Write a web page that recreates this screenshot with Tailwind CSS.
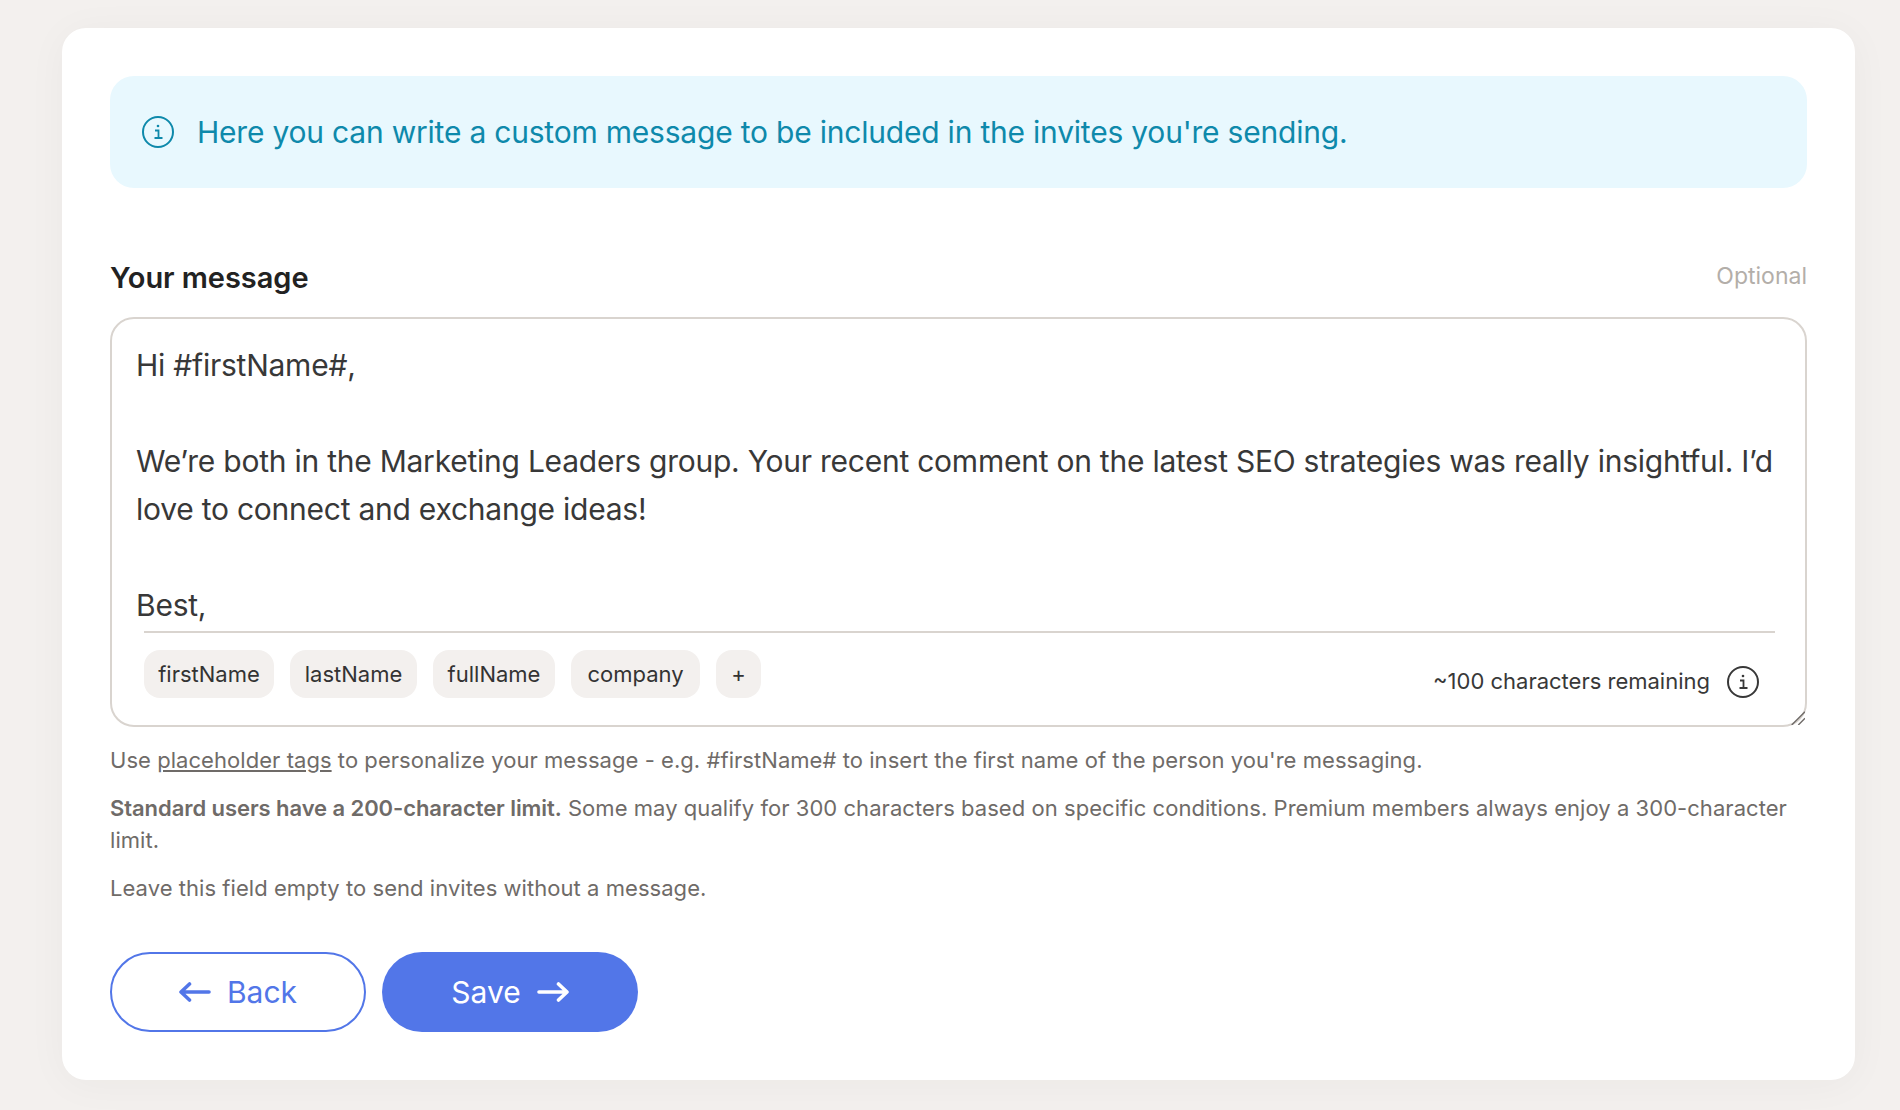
<!DOCTYPE html>
<html>
<head>
<script src="https://cdn.jsdelivr.net/npm/@tailwindcss/browser@4"></script>
<title>Custom message</title>
</head>
<body class="bg-[#f3f0ee] font-['Inter',sans-serif] w-[1900px] h-[1110px] overflow-hidden">
<div class="pt-[28px] pl-[62px]">
  <main class="w-[1793px] h-[1052px] bg-white rounded-[24px] p-[48px] shadow-[0_4px_40px_rgba(60,40,30,0.04)]">
    <div class="h-[112px] rounded-[24px] bg-[#e8f8fe] text-[#0e89ab] flex items-center pl-[32px] gap-[23px]">
      <svg class="w-[32px] h-[32px] shrink-0" viewBox="0 0 32 32" fill="none" stroke="currentColor" stroke-width="2"><circle cx="16" cy="16" r="15"/><path d="M13 14.5h3.5v7.5M12.5 22h8" stroke-width="1.8"/><circle cx="16" cy="10" r="1.3" fill="currentColor" stroke="none"/></svg>
      <p class="text-[30px] tracking-[-0.21px] leading-[40px]">Here you can write a custom message to be included in the invites you're sending.</p>
    </div>
    <div class="mt-[68px] flex justify-between items-center h-[40px]">
      <h2 class="text-[29px] pt-[3px] tracking-[-0.05px] font-semibold text-[#222222]">Your message</h2>
      <span class="text-[23px] text-[#b3aea9]">Optional</span>
    </div>
    <div class="relative mt-[21px] h-[410px] rounded-[24px] border-2 border-[#d9d4cf] pt-[22px]">
      <div class="pl-[24px] pr-[24px] pb-[2px] text-[30px] tracking-[-0.24px] leading-[48px] text-[#383838]">
        <p>Hi #firstName#,</p>
        <p class="mt-[48px]">We’re both in the Marketing Leaders group. Your recent comment on the latest SEO strategies was really insightful. I’d love to connect and exchange ideas!</p>
        <p class="mt-[48px]">Best,</p>
      </div>
      <div class="ml-[32px] mr-[30px] border-t-2 border-[#d9d4cf] pt-[17px] flex items-start justify-between">
        <div class="flex gap-[16px] text-[22px] text-[#333333]">
          <span class="h-[48px] w-[130px] rounded-[16px] bg-[#f3f0ee] flex items-center justify-center">firstName</span>
          <span class="h-[48px] w-[127px] rounded-[16px] bg-[#f3f0ee] flex items-center justify-center">lastName</span>
          <span class="h-[48px] w-[122px] rounded-[16px] bg-[#f3f0ee] flex items-center justify-center">fullName</span>
          <span class="h-[48px] w-[129px] rounded-[16px] bg-[#f3f0ee] flex items-center justify-center">company</span>
          <span class="h-[48px] w-[45px] rounded-[16px] bg-[#f3f0ee] flex items-center justify-center">+</span>
        </div>
        <div class="flex items-center gap-[17px] text-[22px] text-[#383838] mt-[15px] pr-[16px]">
          <span>~100 characters remaining</span>
          <svg class="w-[32px] h-[32px]" viewBox="0 0 32 32" fill="none" stroke="currentColor" stroke-width="2"><circle cx="16" cy="16" r="15"/><path d="M13 14.5h3.5v7.5M12.5 22h8" stroke-width="1.8"/><circle cx="16" cy="10" r="1.3" fill="currentColor" stroke="none"/></svg>
        </div>
      </div>
      <svg class="absolute right-0 bottom-0 w-[16px] h-[16px]" viewBox="0 0 16 16" fill="none" stroke="#6f6b68" stroke-width="1.4"><path d="M2.7 16L16 2.7M9.3 16L16 9.3"/></svg>
    </div>
    <div class="mt-[17px] text-[22px] tracking-[0.05px] leading-[32px] text-[#6f6b68] flex flex-col gap-[16px]">
      <p>Use <a class="underline">placeholder tags</a> to personalize your message - e.g. #firstName# to insert the first name of the person you're messaging.</p>
      <p><strong class="font-semibold tracking-[-0.07px]">Standard users have a 200-character limit.</strong> Some may qualify for 300 characters based on specific conditions. Premium members always enjoy a 300-character limit.</p>
      <p>Leave this field empty to send invites without a message.</p>
    </div>
    <div class="mt-[48px] flex gap-[16px] text-[30px]">
      <button class="w-[256px] h-[80px] rounded-full border-2 border-[#5276e8] text-[#5276e8] flex items-center justify-center gap-[16px]">
        <svg class="w-[32px] h-[24px]" viewBox="0 0 32 24" fill="none" stroke="currentColor" stroke-width="3.6" stroke-linecap="round" stroke-linejoin="round"><path d="M30 12H3M10.500 4L2 12l8.500 8"/></svg>
        <span>Back</span>
      </button>
      <button class="w-[256px] h-[80px] rounded-full bg-[#5276e8] text-white flex items-center justify-center gap-[16px]">
        <span>Save</span>
        <svg class="w-[32px] h-[24px]" viewBox="0 0 32 24" fill="none" stroke="currentColor" stroke-width="3.6" stroke-linecap="round" stroke-linejoin="round"><path d="M2 12h27M21.500 4L30 12l-8.500 8"/></svg>
      </button>
    </div>
  </main>
</div>
</body>
</html>
